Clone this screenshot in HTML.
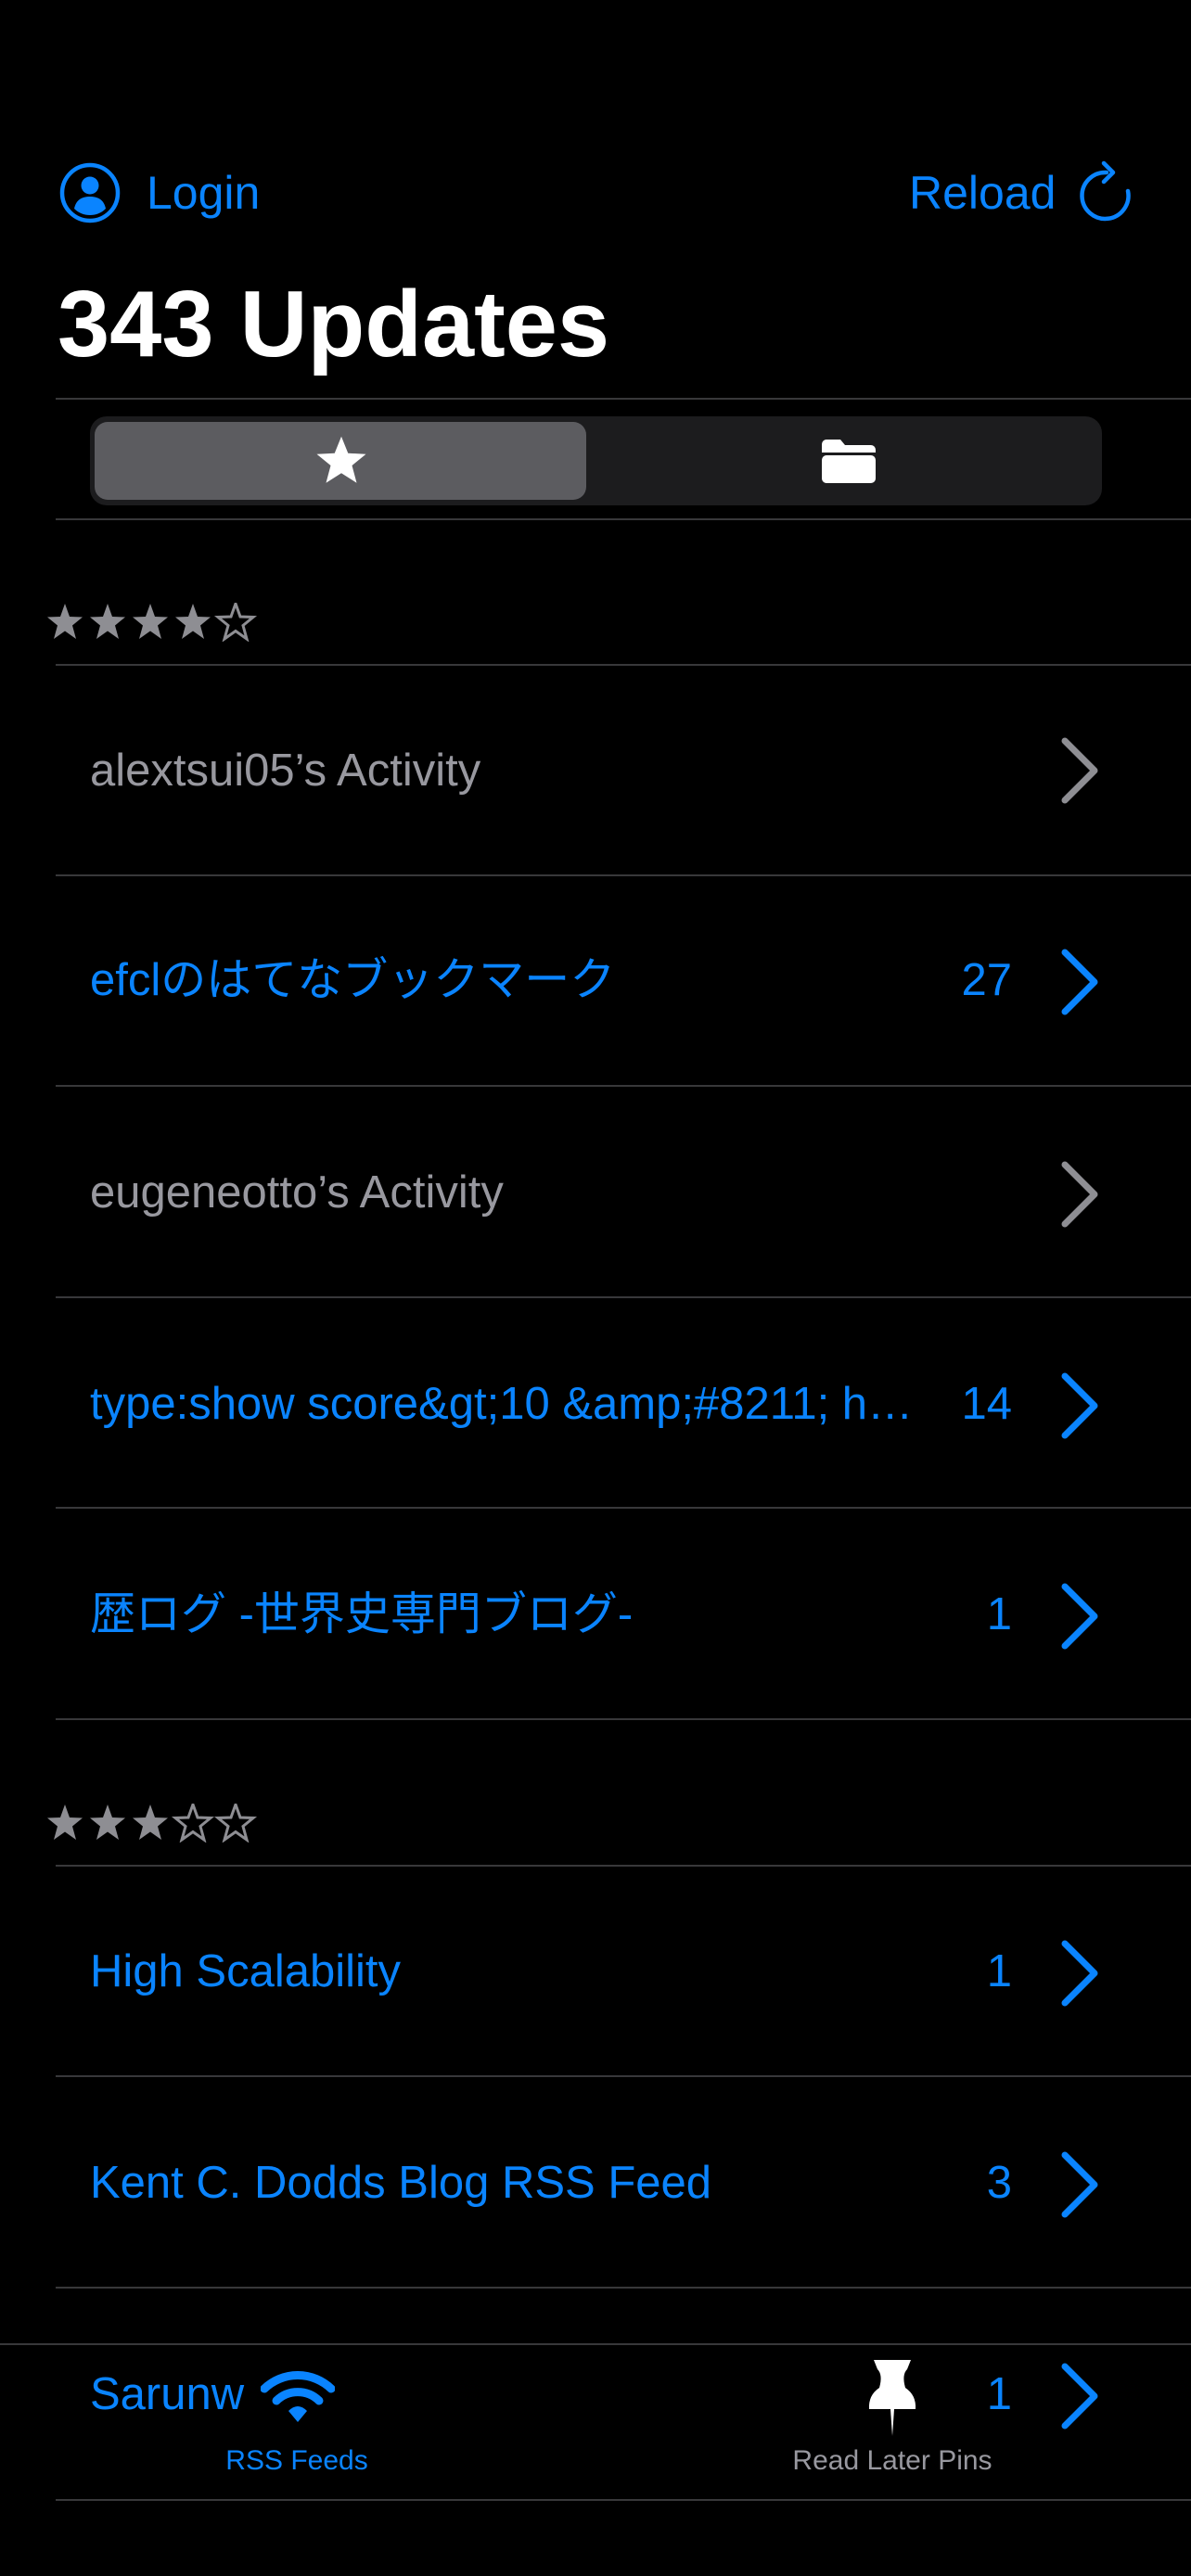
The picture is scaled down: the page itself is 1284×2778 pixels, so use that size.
<!DOCTYPE html>
<html><head><meta charset="utf-8"><style>
*{margin:0;padding:0;box-sizing:border-box}
html,body{width:1284px;height:2778px;background:#000;overflow:hidden}
body{position:relative;font-family:"Liberation Sans","Noto Sans CJK JP",sans-serif;color:#0a84ff}
.a{position:absolute}
.hr{position:absolute;left:60px;right:0;height:2px;background:#38383a}
.t{position:absolute;left:97px;font-size:49px;line-height:60px;white-space:nowrap}
.g{color:#98989f}
.cnt{position:absolute;right:193px;font-size:49px;line-height:60px;text-align:right}
.chev{position:absolute;left:1140px;width:48px;height:76px}
</style></head><body>

<svg class="a" style="left:64px;top:175px" width="66" height="66" viewBox="0 0 66 66">
<circle cx="33" cy="33" r="30" fill="none" stroke="#0a84ff" stroke-width="4.5"/>
<circle cx="33" cy="25" r="9.5" fill="#0a84ff"/>
<path d="M16 50 C18 40 25 37 33 37 C41 37 48 40 50 50 C45 55 39 57 33 57 C27 57 21 55 16 50Z" fill="#0a84ff"/>
</svg>
<div class="a" style="left:158px;top:178px;font-size:50px;line-height:60px">Login</div>
<div class="a" style="left:980px;top:178px;font-size:50px;line-height:60px">Reload</div>
<svg class="a" style="left:1160px;top:172px" width="64" height="72" viewBox="0 0 64 72">
<path d="M33 14 A25 25 0 1 0 56 34" fill="none" stroke="#0a84ff" stroke-width="4.5" stroke-linecap="round"/>
<path d="M30 4 L40 14 L30 24" fill="none" stroke="#0a84ff" stroke-width="4.5" stroke-linecap="round" stroke-linejoin="round"/>
</svg>

<div class="a" style="left:62px;top:292px;font-size:101px;line-height:116px;font-weight:bold;color:#fff">343 Updates</div>

<div class="hr" style="top:429px"></div>
<div class="a" style="left:97px;top:449px;width:1091px;height:96px;background:#1c1c1e;border-radius:18px"></div>
<div class="a" style="left:102px;top:455px;width:530px;height:84px;background:#5c5c60;border-radius:14px"></div>
<svg class="a" style="left:338px;top:468px" width="60" height="58" viewBox="0 0 24 23">
<path d="M12 1 L14.9 8.2 L22.6 8.6 L16.6 13.5 L18.6 21 L12 16.8 L5.4 21 L7.4 13.5 L1.4 8.6 L9.1 8.2Z" fill="#fff"/>
</svg>
<svg class="a" style="left:886px;top:474px" width="58" height="47" viewBox="0 0 58 47">
<path d="M5 0 H20 L25 6 H53 A5 5 0 0 1 58 11 V14 H0 V5 A5 5 0 0 1 5 0Z" fill="#fff"/>
<rect x="0" y="17" width="58" height="30" rx="5" fill="#fff"/>
</svg>
<div class="hr" style="top:559px"></div>

<svg class="a" style="left:50px;top:650px" width="230" height="42" viewBox="0 0 230 42">
<g fill="#8e8e93">
<path id="s" d="M20 1 L25 15 L39 15.5 L28 24.5 L32 39 L20 30.5 L8 39 L12 24.5 L1 15.5 L15 15Z"/>
<use href="#s" x="46"/><use href="#s" x="92"/><use href="#s" x="138"/>
</g>
<use href="#s" x="184" fill="none" stroke="#8e8e93" stroke-width="3"/>
</svg>
<div class="hr" style="top:716px"></div>

<div class="t g" style="top:801px">alextsui05’s Activity</div>
<svg class="chev" style="top:793px" viewBox="0 0 48 76"><path d="M8 6 L40 38 L8 70" fill="none" stroke="#8e8e93" stroke-width="7" stroke-linecap="round" stroke-linejoin="round"/></svg>
<div class="hr" style="top:943px"></div>

<div class="t" style="top:1027px">efclのはてなブックマーク</div>
<div class="cnt" style="top:1027px">27</div>
<svg class="chev" style="top:1021px" viewBox="0 0 48 76"><path d="M8 6 L40 38 L8 70" fill="none" stroke="#0a84ff" stroke-width="7" stroke-linecap="round" stroke-linejoin="round"/></svg>
<div class="hr" style="top:1170px"></div>

<div class="t g" style="top:1256px">eugeneotto’s Activity</div>
<svg class="chev" style="top:1250px" viewBox="0 0 48 76"><path d="M8 6 L40 38 L8 70" fill="none" stroke="#8e8e93" stroke-width="7" stroke-linecap="round" stroke-linejoin="round"/></svg>
<div class="hr" style="top:1398px"></div>

<div class="t" style="top:1484px;width:900px;overflow:hidden;text-overflow:ellipsis">type:show score&amp;gt;10 &amp;amp;#8211; hn…</div>
<div class="cnt" style="top:1484px">14</div>
<svg class="chev" style="top:1478px" viewBox="0 0 48 76"><path d="M8 6 L40 38 L8 70" fill="none" stroke="#0a84ff" stroke-width="7" stroke-linecap="round" stroke-linejoin="round"/></svg>
<div class="hr" style="top:1625px"></div>

<div class="t" style="top:1711px">歴ログ -世界史専門ブログ-</div>
<div class="cnt" style="top:1711px">1</div>
<svg class="chev" style="top:1705px" viewBox="0 0 48 76"><path d="M8 6 L40 38 L8 70" fill="none" stroke="#0a84ff" stroke-width="7" stroke-linecap="round" stroke-linejoin="round"/></svg>
<div class="hr" style="top:1853px"></div>

<svg class="a" style="left:50px;top:1945px" width="230" height="42" viewBox="0 0 230 42">
<g fill="#8e8e93"><use href="#s"/><use href="#s" x="46"/><use href="#s" x="92"/></g>
<g fill="none" stroke="#8e8e93" stroke-width="3"><use href="#s" x="138"/><use href="#s" x="184"/></g>
</svg>
<div class="hr" style="top:2011px"></div>

<div class="t" style="top:2096px">High Scalability</div>
<div class="cnt" style="top:2096px">1</div>
<svg class="chev" style="top:2090px" viewBox="0 0 48 76"><path d="M8 6 L40 38 L8 70" fill="none" stroke="#0a84ff" stroke-width="7" stroke-linecap="round" stroke-linejoin="round"/></svg>
<div class="hr" style="top:2238px"></div>

<div class="t" style="top:2324px">Kent C. Dodds Blog RSS Feed</div>
<div class="cnt" style="top:2324px">3</div>
<svg class="chev" style="top:2318px" viewBox="0 0 48 76"><path d="M8 6 L40 38 L8 70" fill="none" stroke="#0a84ff" stroke-width="7" stroke-linecap="round" stroke-linejoin="round"/></svg>
<div class="hr" style="top:2466px"></div>

<div class="a" style="left:0;right:0;top:2527px;height:2px;background:#38383a"></div>
<div class="t" style="top:2552px">Sarunw</div>
<div class="cnt" style="top:2552px">1</div>
<svg class="chev" style="top:2546px" viewBox="0 0 48 76"><path d="M8 6 L40 38 L8 70" fill="none" stroke="#0a84ff" stroke-width="7" stroke-linecap="round" stroke-linejoin="round"/></svg>
<div class="hr" style="top:2695px"></div>

<svg class="a" style="left:281px;top:2556px" width="80" height="58" viewBox="0 0 80 58">
<path d="M4 20 A52 52 0 0 1 76 20" fill="none" stroke="#0a84ff" stroke-width="9" stroke-linecap="round"/>
<path d="M17 33 A33 33 0 0 1 63 33" fill="none" stroke="#0a84ff" stroke-width="9" stroke-linecap="round"/>
<path d="M30 44 Q40 34 50 44 L40 56 Z" fill="#0a84ff"/>
</svg>
<div class="a" style="left:220px;width:200px;top:2636px;text-align:center;font-size:30px;line-height:36px">RSS Feeds</div>

<svg class="a" style="left:934px;top:2545px" width="56" height="82" viewBox="0 0 56 82">
<path d="M8 0 H48 L44 10 Q38 16 42 30 Q54 38 53 53 H3 Q2 38 14 30 Q18 16 12 10Z" fill="#fff"/>
<path d="M26 53 H30 L28 82Z" fill="#fff"/>
</svg>
<div class="a" style="left:812px;width:300px;top:2636px;text-align:center;font-size:30px;line-height:36px;color:#98989f">Read Later Pins</div>

</body></html>
